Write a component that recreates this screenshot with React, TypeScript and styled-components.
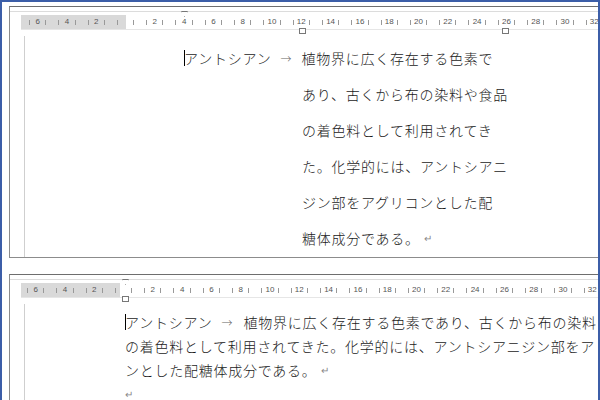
import React from "react";
import styled, { createGlobalStyle } from "styled-components";

const G = createGlobalStyle`
  html,body{margin:0;padding:0;background:#fff;}
  body{font-family:"Noto Sans CJK JP","Noto Sans",sans-serif;}
`;

const Frame = styled.div`
  width:600px;height:400px;box-sizing:border-box;border:2px solid #3c5ea8;border-bottom:none;
  background:#fff;overflow:hidden;display:flex;flex-direction:column;gap:16px;padding:4px 0 0 7px;
`;
const Panel = styled.div<{ h: number }>`
  height:${p => p.h}px;flex:none;box-sizing:border-box;border:1px solid #8c8c8c;border-right:none;
  border-top:1px solid #6e6e6e;padding-top:4px;display:flex;flex-direction:column;overflow:hidden;
`;
const Inner = styled.div`
  border-top:1px solid #dcdcdc;padding-top:3px;display:flex;flex-direction:column;flex:1;
`;
const RulerBar = styled.div<{ gray: number }>`
  position:relative;height:14px;margin-left:11px;
  background:linear-gradient(to right,#d9d9d9 0 ${p => p.gray}px,#fff ${p => p.gray}px);
  border-bottom:1px solid #e6e6e6;display:flex;padding-left:${p => p.gray - 103}px;
  font-family:"Liberation Sans",Arial,sans-serif;font-size:8px;color:#555;
`;
const Cell = styled.div`
  width:29.3px;flex:none;display:flex;justify-content:space-between;align-items:center;padding:0 6px;box-sizing:border-box;
  line-height:14px;
`;
const Tick = styled.span`width:1px;height:5px;background:#999;`;
const Marker = styled.div<{ x: number; top?: boolean }>`
  position:absolute;left:${p => p.x}px;top:${p => (p.top ? -4 : 13)}px;width:7px;height:6px;
  border:1px solid #777;background:#fff;box-sizing:border-box;
  ${p => (p.top ? "clip-path:polygon(0 0,100% 0,50% 100%);" : "")}
`;
const Body = styled.div`
  flex:1;margin-left:14px;border-left:1px solid #cfcfcf;margin-top:6px;position:relative;
`;
const Text = styled.div<{ lh: number; ls: number; left: number; top: number }>`
  padding-left:${p => p.left}px;padding-top:${p => p.top}px;font-size:14px;line-height:${p => p.lh}px;
  letter-spacing:${p => p.ls}px;color:#1a1a1a;white-space:nowrap;font-weight:300;
`;
const Line = styled.div<{ indent?: number }>`padding-left:${p => p.indent || 0}px;display:flex;`;
const Caret = styled.span`display:inline-block;width:1px;height:16px;background:#000;align-self:center;margin-right:-1px;`;
const Arrow = styled.span<{ w: number }>`display:inline-block;width:${p => p.w}px;color:#666;font-size:11px;letter-spacing:0;text-indent:9px;`;
const Ret = styled.span`color:#888;font-size:10px;margin-left:4px;letter-spacing:0;`;

function Ruler({ gray, markers }: { gray: number; markers: React.ReactNode }) {
  const nums = [6, 4, 2, 0, 2, 4, 6, 8, 10, 12, 14, 16, 18, 20, 22, 24, 26, 28, 30, 32];
  return (
    <RulerBar gray={gray}>
      {nums.map((n, i) => (
        <Cell key={i}>
          <Tick />
          <span>{n === 0 ? "" : n}</span>
          <Tick />
        </Cell>
      ))}
      {markers}
    </RulerBar>
  );
}

export default function App() {
  return (
    <>
      <G />
      <Frame>
        <Panel h={252}>
          <Inner>
            <Ruler gray={105} markers={<><Marker x={160} top /><Marker x={278} /><Marker x={481} /></>} />
            <Body>
              <Text lh={36} ls={0.75} left={159} top={4}>
                <Line><Caret />アントシアン<Arrow w={30}>→</Arrow>植物界に広く存在する色素で</Line>
                <Line indent={118}>あり、古くから布の染料や食品</Line>
                <Line indent={118}>の着色料として利用されてき</Line>
                <Line indent={118}>た。化学的には、アントシアニ</Line>
                <Line indent={118}>ジン部をアグリコンとした配</Line>
                <Line indent={118}>糖体成分である。<Ret>↵</Ret></Line>
              </Text>
            </Body>
          </Inner>
        </Panel>
        <Panel h={140}>
          <Inner>
            <Ruler gray={99} markers={<><Marker x={101} top /><Marker x={101} /></>} />
            <Body>
              <Text lh={24} ls={0.75} left={100} top={6}>
                <Line><Caret />アントシアン<Arrow w={31}>→</Arrow>植物界に広く存在する色素であり、古くから布の染料</Line>
                <Line>の着色料として利用されてきた。化学的には、アントシアニジン部をア</Line>
                <Line>ンとした配糖体成分である。<Ret>↵</Ret></Line>
                <Line><Ret style={{ marginLeft: 0 }}>↵</Ret></Line>
              </Text>
            </Body>
          </Inner>
        </Panel>
      </Frame>
    </>
  );
}
